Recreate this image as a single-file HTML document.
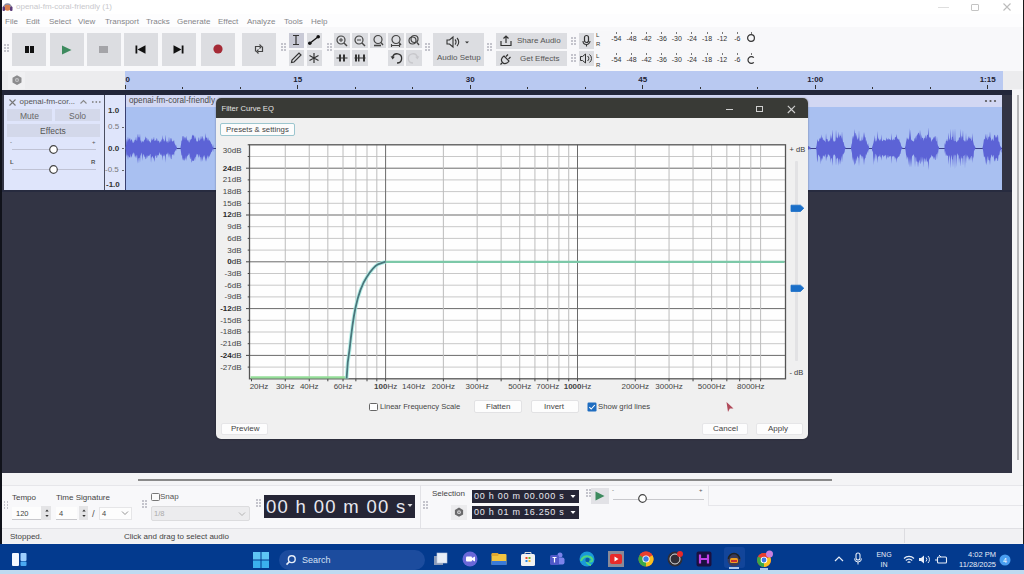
<!DOCTYPE html>
<html><head><meta charset="utf-8">
<style>
*{margin:0;padding:0;box-sizing:border-box}
html,body{width:1024px;height:574px;overflow:hidden;background:#f3f3f5;font-family:"Liberation Sans",sans-serif;color:#333}
.a{position:absolute}
.t{position:absolute;white-space:nowrap;line-height:1}
svg{position:absolute;overflow:visible}
</style></head><body>
<div class="a" style="left:0px;top:0px;width:1024px;height:14px;background:#ffffff;"></div>
<svg style="left:2px;top:1px" width="12" height="11"><circle cx="5.5" cy="6.5" r="3.2" fill="#d88050"/><path d="M1.5 7a4 4 0 0 1 8 0" stroke="#8a8aa0" stroke-width="1.3" fill="none"/><rect x="0.5" y="5.5" width="2.5" height="4.5" rx="1" fill="#5a3a7a"/><rect x="8" y="5.5" width="2.5" height="4.5" rx="1" fill="#5a3a7a"/></svg>
<div class="t" style="left:16px;top:3px;font-size:8px;color:#c8c8cc;font-weight:normal;">openai-fm-coral-friendly (1)</div>
<div class="a" style="left:938px;top:6.5px;width:11px;height:1px;background:#dedede;"></div>
<div class="a" style="left:971px;top:3.5px;width:8px;height:7px;border:1.3px solid #c4c4c4;border-radius:1px"></div>
<svg style="left:1002px;top:2px" width="10" height="10"><path d="M1.5 1.5L8.5 8.5M8.5 1.5L1.5 8.5" stroke="#bcbcbc" stroke-width="1.1"/></svg>
<div class="a" style="left:0px;top:0px;width:1.5px;height:545px;background:#10121a;"></div>
<div class="a" style="left:1.5px;top:14px;width:1022px;height:14px;background:#fdfdfe;"></div>
<div class="t" style="left:5px;top:17.5px;font-size:8px;color:#858589;font-weight:normal;">File</div>
<div class="t" style="left:26px;top:17.5px;font-size:8px;color:#858589;font-weight:normal;">Edit</div>
<div class="t" style="left:49px;top:17.5px;font-size:8px;color:#858589;font-weight:normal;">Select</div>
<div class="t" style="left:78px;top:17.5px;font-size:8px;color:#858589;font-weight:normal;">View</div>
<div class="t" style="left:105px;top:17.5px;font-size:8px;color:#858589;font-weight:normal;">Transport</div>
<div class="t" style="left:146px;top:17.5px;font-size:8px;color:#858589;font-weight:normal;">Tracks</div>
<div class="t" style="left:177px;top:17.5px;font-size:8px;color:#858589;font-weight:normal;">Generate</div>
<div class="t" style="left:218px;top:17.5px;font-size:8px;color:#858589;font-weight:normal;">Effect</div>
<div class="t" style="left:247px;top:17.5px;font-size:8px;color:#858589;font-weight:normal;">Analyze</div>
<div class="t" style="left:284px;top:17.5px;font-size:8px;color:#858589;font-weight:normal;">Tools</div>
<div class="t" style="left:311px;top:17.5px;font-size:8px;color:#858589;font-weight:normal;">Help</div>
<div class="a" style="left:1.5px;top:27px;width:1022px;height:44px;background:#f8f8fa;"></div>
<div class="a" style="left:4px;top:44px;width:1.5px;height:1.5px;background:#c4c4cc;"></div>
<div class="a" style="left:7px;top:44px;width:1.5px;height:1.5px;background:#c4c4cc;"></div>
<div class="a" style="left:4px;top:47px;width:1.5px;height:1.5px;background:#c4c4cc;"></div>
<div class="a" style="left:7px;top:47px;width:1.5px;height:1.5px;background:#c4c4cc;"></div>
<div class="a" style="left:4px;top:50px;width:1.5px;height:1.5px;background:#c4c4cc;"></div>
<div class="a" style="left:7px;top:50px;width:1.5px;height:1.5px;background:#c4c4cc;"></div>
<div class="a" style="left:12px;top:32.5px;width:34px;height:33px;background:#dcdde1;"></div>
<div class="a" style="left:49.5px;top:32.5px;width:34px;height:33px;background:#dcdde1;"></div>
<div class="a" style="left:87px;top:32.5px;width:34px;height:33px;background:#dcdde1;"></div>
<div class="a" style="left:124px;top:32.5px;width:34px;height:33px;background:#dcdde1;"></div>
<div class="a" style="left:161.5px;top:32.5px;width:34px;height:33px;background:#dcdde1;"></div>
<div class="a" style="left:201px;top:32.5px;width:34px;height:33px;background:#dcdde1;"></div>
<div class="a" style="left:241.5px;top:32.5px;width:34px;height:33px;background:#dcdde1;"></div>
<div class="a" style="left:25.3px;top:45.5px;width:3.3px;height:7.8px;background:#111;"></div>
<div class="a" style="left:30.3px;top:45.5px;width:3.3px;height:7.8px;background:#111;"></div>
<svg style="left:61px;top:44.5px" width="12" height="10"><path d="M1 0.5L10.5 5L1 9.5Z" fill="#3d8a5e"/></svg>
<div class="a" style="left:99.3px;top:45.5px;width:8.4px;height:7.8px;background:#a4a4a8;"></div>
<svg style="left:135px;top:45px" width="12" height="9"><rect x="0.5" y="0.5" width="1.8" height="8" fill="#111"/><path d="M10.5 0.3L2.5 4.5L10.5 8.7Z" fill="#111"/></svg>
<svg style="left:173px;top:45px" width="12" height="9"><rect x="8.7" y="0.5" width="1.8" height="8" fill="#111"/><path d="M0.5 0.3L8.5 4.5L0.5 8.7Z" fill="#111"/></svg>
<svg style="left:210px;top:41px" width="16" height="16"><circle cx="8" cy="8" r="4.6" fill="#a52a36"/></svg>
<svg style="left:251px;top:41px" width="16" height="16"><path d="M4.5 10.5V5.5h5M11.5 5.5v5h-5" stroke="#444" stroke-width="1.2" fill="none"/><path d="M8.5 3.5l2 2-2 2M7.5 8.5l-2 2 2 2" stroke="#444" stroke-width="1.1" fill="none"/></svg>
<div class="a" style="left:281px;top:43px;width:1.5px;height:1.5px;background:#c4c4cc;"></div>
<div class="a" style="left:284px;top:43px;width:1.5px;height:1.5px;background:#c4c4cc;"></div>
<div class="a" style="left:281px;top:46px;width:1.5px;height:1.5px;background:#c4c4cc;"></div>
<div class="a" style="left:284px;top:46px;width:1.5px;height:1.5px;background:#c4c4cc;"></div>
<div class="a" style="left:281px;top:49px;width:1.5px;height:1.5px;background:#c4c4cc;"></div>
<div class="a" style="left:284px;top:49px;width:1.5px;height:1.5px;background:#c4c4cc;"></div>
<div class="a" style="left:288.5px;top:32.5px;width:15.5px;height:15.5px;background:#c9cad6;"></div>
<div class="a" style="left:306.5px;top:32.5px;width:15.5px;height:15.5px;background:#dcdde1;"></div>
<div class="a" style="left:288.5px;top:50.3px;width:15.5px;height:15.5px;background:#dcdde1;"></div>
<div class="a" style="left:306.5px;top:50.3px;width:15.5px;height:15.5px;background:#dcdde1;"></div>
<svg style="left:288px;top:32px" width="16" height="16"><path d="M5 3.5h6M5 12.5h6M8 3.5v9" stroke="#333" stroke-width="1.2" fill="none"/></svg>
<svg style="left:306px;top:32px" width="16" height="16"><path d="M3.5 11.5L12.5 4.5" stroke="#111" stroke-width="1.3"/><circle cx="3.8" cy="11.3" r="1.8" fill="#111"/><circle cx="12.2" cy="4.7" r="1.8" fill="#111"/></svg>
<svg style="left:288px;top:50px" width="16" height="16"><path d="M3.5 12.5L4 10L11 3L13 5L6 12Z" stroke="#333" stroke-width="1.2" fill="none"/></svg>
<svg style="left:306px;top:50px" width="16" height="16"><path d="M8 3v10M3.5 5.5l9 5M12.5 5.5l-9 5" stroke="#333" stroke-width="1.2"/></svg>
<div class="a" style="left:327px;top:43px;width:1.5px;height:1.5px;background:#c4c4cc;"></div>
<div class="a" style="left:330px;top:43px;width:1.5px;height:1.5px;background:#c4c4cc;"></div>
<div class="a" style="left:327px;top:46px;width:1.5px;height:1.5px;background:#c4c4cc;"></div>
<div class="a" style="left:330px;top:46px;width:1.5px;height:1.5px;background:#c4c4cc;"></div>
<div class="a" style="left:327px;top:49px;width:1.5px;height:1.5px;background:#c4c4cc;"></div>
<div class="a" style="left:330px;top:49px;width:1.5px;height:1.5px;background:#c4c4cc;"></div>
<div class="a" style="left:334px;top:32.5px;width:16px;height:15.5px;background:#dcdde1;"></div>
<div class="a" style="left:352px;top:32.5px;width:16px;height:15.5px;background:#dcdde1;"></div>
<div class="a" style="left:370px;top:32.5px;width:16px;height:15.5px;background:#dcdde1;"></div>
<div class="a" style="left:388px;top:32.5px;width:16px;height:15.5px;background:#dcdde1;"></div>
<div class="a" style="left:406px;top:32.5px;width:16px;height:15.5px;background:#dcdde1;"></div>
<div class="a" style="left:334px;top:50.3px;width:16px;height:15.5px;background:#dcdde1;"></div>
<div class="a" style="left:352px;top:50.3px;width:16px;height:15.5px;background:#dcdde1;"></div>
<div class="a" style="left:388px;top:50.3px;width:16px;height:15.5px;background:#dcdde1;"></div>
<div class="a" style="left:406px;top:50.3px;width:16px;height:15.5px;background:#dcdde1;"></div>
<svg style="left:334px;top:33px" width="16" height="16"><circle cx="7" cy="7" r="4" stroke="#444" stroke-width="1.2" fill="none"/><path d="M10 10l3 3" stroke="#444" stroke-width="1.4"/><path d="M5 7h4M7 5v4" stroke="#444" stroke-width="1"/></svg>
<svg style="left:352px;top:33px" width="16" height="16"><circle cx="7" cy="7" r="4" stroke="#444" stroke-width="1.2" fill="none"/><path d="M10 10l3 3" stroke="#444" stroke-width="1.4"/><path d="M5 7h4" stroke="#444" stroke-width="1"/></svg>
<svg style="left:370px;top:33px" width="16" height="16"><circle cx="8" cy="6.5" r="4" stroke="#444" stroke-width="1.2" fill="none"/><path d="M11 9.5l2 2.5" stroke="#444" stroke-width="1.3"/><path d="M4 12.5h7" stroke="#444" stroke-width="1.6"/></svg>
<svg style="left:388px;top:33px" width="16" height="16"><circle cx="8" cy="6.5" r="4" stroke="#444" stroke-width="1.2" fill="none"/><path d="M11 9.5l2 2.5" stroke="#444" stroke-width="1.3"/><path d="M3.5 12.5h8M3.5 11v3M11.5 11v3" stroke="#444" stroke-width="1.1"/></svg>
<svg style="left:406px;top:33px" width="16" height="16"><circle cx="6.5" cy="7.5" r="3.5" stroke="#444" stroke-width="1.2" fill="none"/><circle cx="8.5" cy="6" r="3.5" stroke="#444" stroke-width="1.2" fill="none"/><path d="M11 9.5l2 2.5" stroke="#444" stroke-width="1.3"/></svg>
<svg style="left:334px;top:50px" width="16" height="16"><path d="M2.5 8h11" stroke="#333" stroke-width="1"/><rect x="5" y="4.5" width="2" height="7" fill="#333"/><rect x="9" y="4.5" width="2" height="7" fill="#333"/></svg>
<svg style="left:352px;top:50px" width="16" height="16"><path d="M2.5 8h11" stroke="#333" stroke-width="1"/><rect x="3" y="4.5" width="2" height="7" fill="#333"/><rect x="6" y="4.5" width="1.5" height="7" fill="#333"/><rect x="11" y="4.5" width="2" height="7" fill="#333"/></svg>
<svg style="left:388px;top:50px" width="16" height="16"><path d="M9 13A4.6 4.6 0 1 0 4.6 7.2" stroke="#333" stroke-width="1.3" fill="none"/><path d="M2.6 6.2L4.6 9.6L6.8 6.8Z" fill="#333"/></svg>
<svg style="left:406px;top:50px" width="16" height="16"><path d="M7 13A4.6 4.6 0 1 1 11.4 7.2" stroke="#c8c8cc" stroke-width="1.3" fill="none"/><path d="M13.4 6.2L11.4 9.6L9.2 6.8Z" fill="#c8c8cc"/></svg>
<div class="a" style="left:425px;top:43px;width:1.5px;height:1.5px;background:#c4c4cc;"></div>
<div class="a" style="left:428px;top:43px;width:1.5px;height:1.5px;background:#c4c4cc;"></div>
<div class="a" style="left:425px;top:46px;width:1.5px;height:1.5px;background:#c4c4cc;"></div>
<div class="a" style="left:428px;top:46px;width:1.5px;height:1.5px;background:#c4c4cc;"></div>
<div class="a" style="left:425px;top:49px;width:1.5px;height:1.5px;background:#c4c4cc;"></div>
<div class="a" style="left:428px;top:49px;width:1.5px;height:1.5px;background:#c4c4cc;"></div>
<div class="a" style="left:433px;top:32.5px;width:51px;height:33px;background:#dcdde1;"></div>
<svg style="left:445px;top:35px" width="26" height="14"><path d="M2 5h2.5L8 2v10L4.5 9H2Z" stroke="#333" stroke-width="1.1" fill="none"/><path d="M10 4.5a3.5 3.5 0 0 1 0 5M12 3a5.5 5.5 0 0 1 0 8" stroke="#333" stroke-width="1.1" fill="none"/><path d="M20 6.5l2 2 2-2Z" fill="#333"/></svg>
<div class="t" style="left:437px;top:53.8px;font-size:8px;color:#555;font-weight:normal;">Audio Setup</div>
<div class="a" style="left:487px;top:43px;width:1.5px;height:1.5px;background:#c4c4cc;"></div>
<div class="a" style="left:490px;top:43px;width:1.5px;height:1.5px;background:#c4c4cc;"></div>
<div class="a" style="left:487px;top:46px;width:1.5px;height:1.5px;background:#c4c4cc;"></div>
<div class="a" style="left:490px;top:46px;width:1.5px;height:1.5px;background:#c4c4cc;"></div>
<div class="a" style="left:487px;top:49px;width:1.5px;height:1.5px;background:#c4c4cc;"></div>
<div class="a" style="left:490px;top:49px;width:1.5px;height:1.5px;background:#c4c4cc;"></div>
<div class="a" style="left:495.5px;top:33px;width:71.5px;height:15.5px;background:#dcdde1;"></div>
<div class="a" style="left:495.5px;top:50.5px;width:71.5px;height:15.5px;background:#dcdde1;"></div>
<svg style="left:498px;top:33px" width="16" height="15"><path d="M3 8v4.5h10V8" stroke="#333" stroke-width="1.2" fill="none"/><path d="M8 10V3M5.5 5.5L8 3l2.5 2.5" stroke="#333" stroke-width="1.2" fill="none"/></svg>
<div class="t" style="left:517px;top:37px;font-size:8px;color:#555;font-weight:normal;">Share Audio</div>
<svg style="left:498px;top:51px" width="16" height="15"><path d="M4 12L2.5 13.5M4.5 11.5c-2-2-1-5 1.5-6.5L11 10c-1.5 2.5-4.5 3.5-6.5 1.5ZM8 5.5l2-2M10.5 8l2-2" stroke="#333" stroke-width="1.2" fill="none"/></svg>
<div class="t" style="left:520px;top:55.3px;font-size:8px;color:#555;font-weight:normal;">Get Effects</div>
<div class="a" style="left:571px;top:37px;width:1.5px;height:1.5px;background:#c4c4cc;"></div>
<div class="a" style="left:574px;top:37px;width:1.5px;height:1.5px;background:#c4c4cc;"></div>
<div class="a" style="left:571px;top:40px;width:1.5px;height:1.5px;background:#c4c4cc;"></div>
<div class="a" style="left:574px;top:40px;width:1.5px;height:1.5px;background:#c4c4cc;"></div>
<div class="a" style="left:571px;top:43px;width:1.5px;height:1.5px;background:#c4c4cc;"></div>
<div class="a" style="left:574px;top:43px;width:1.5px;height:1.5px;background:#c4c4cc;"></div>
<div class="a" style="left:571px;top:54px;width:1.5px;height:1.5px;background:#c4c4cc;"></div>
<div class="a" style="left:574px;top:54px;width:1.5px;height:1.5px;background:#c4c4cc;"></div>
<div class="a" style="left:571px;top:57px;width:1.5px;height:1.5px;background:#c4c4cc;"></div>
<div class="a" style="left:574px;top:57px;width:1.5px;height:1.5px;background:#c4c4cc;"></div>
<div class="a" style="left:571px;top:60px;width:1.5px;height:1.5px;background:#c4c4cc;"></div>
<div class="a" style="left:574px;top:60px;width:1.5px;height:1.5px;background:#c4c4cc;"></div>
<div class="a" style="left:578.5px;top:33px;width:15.5px;height:15.5px;background:#dcdde1;"></div>
<div class="a" style="left:578.5px;top:50.5px;width:15.5px;height:15.5px;background:#dcdde1;"></div>
<svg style="left:579px;top:33px" width="15" height="15"><rect x="5.5" y="2.5" width="4" height="7" rx="2" stroke="#333" stroke-width="1.2" fill="none"/><path d="M4 8a3.5 3.5 0 0 0 7 0M7.5 11.5v2" stroke="#333" stroke-width="1.1" fill="none"/></svg>
<svg style="left:579px;top:51px" width="15" height="15"><path d="M1.5 5.5h2L6.5 3v9L3.5 9.5h-2Z" stroke="#333" stroke-width="1" fill="none"/><path d="M8.5 5a3 3 0 0 1 0 5M10.5 3.5a5 5 0 0 1 0 8" stroke="#333" stroke-width="1" fill="none"/></svg>
<div class="a" style="left:595px;top:31px;width:165px;height:38px;background:#f7f7f9;"></div>
<div class="t" style="left:596px;top:32px;font-size:6px;color:#333;font-weight:normal;">L</div>
<div class="t" style="left:596px;top:40.5px;font-size:6px;color:#333;font-weight:normal;">R</div>
<div class="a" style="left:615.9px;top:31.5px;width:1px;height:2.5px;background:#777;"></div>
<div class="t" style="left:606.4px;top:35px;width:20px;text-align:center;font-size:7px;color:#333">-54</div>
<div class="a" style="left:631.01px;top:31.5px;width:1px;height:2.5px;background:#777;"></div>
<div class="t" style="left:621.51px;top:35px;width:20px;text-align:center;font-size:7px;color:#333">-48</div>
<div class="a" style="left:646.12px;top:31.5px;width:1px;height:2.5px;background:#777;"></div>
<div class="t" style="left:636.62px;top:35px;width:20px;text-align:center;font-size:7px;color:#333">-42</div>
<div class="a" style="left:661.23px;top:31.5px;width:1px;height:2.5px;background:#777;"></div>
<div class="t" style="left:651.73px;top:35px;width:20px;text-align:center;font-size:7px;color:#333">-36</div>
<div class="a" style="left:676.3399999999999px;top:31.5px;width:1px;height:2.5px;background:#777;"></div>
<div class="t" style="left:666.8399999999999px;top:35px;width:20px;text-align:center;font-size:7px;color:#333">-30</div>
<div class="a" style="left:691.4499999999999px;top:31.5px;width:1px;height:2.5px;background:#777;"></div>
<div class="t" style="left:681.9499999999999px;top:35px;width:20px;text-align:center;font-size:7px;color:#333">-24</div>
<div class="a" style="left:706.56px;top:31.5px;width:1px;height:2.5px;background:#777;"></div>
<div class="t" style="left:697.06px;top:35px;width:20px;text-align:center;font-size:7px;color:#333">-18</div>
<div class="a" style="left:721.67px;top:31.5px;width:1px;height:2.5px;background:#777;"></div>
<div class="t" style="left:712.17px;top:35px;width:20px;text-align:center;font-size:7px;color:#333">-12</div>
<div class="a" style="left:736.78px;top:31.5px;width:1px;height:2.5px;background:#777;"></div>
<div class="t" style="left:727.28px;top:35px;width:20px;text-align:center;font-size:7px;color:#333">-6</div>
<div class="a" style="left:751px;top:31.5px;width:1px;height:2.5px;background:#777;"></div>
<div class="t" style="left:596px;top:53px;font-size:6px;color:#333;font-weight:normal;">L</div>
<div class="t" style="left:596px;top:61.5px;font-size:6px;color:#333;font-weight:normal;">R</div>
<div class="a" style="left:615.9px;top:52.5px;width:1px;height:2.5px;background:#777;"></div>
<div class="t" style="left:606.4px;top:56px;width:20px;text-align:center;font-size:7px;color:#333">-54</div>
<div class="a" style="left:631.01px;top:52.5px;width:1px;height:2.5px;background:#777;"></div>
<div class="t" style="left:621.51px;top:56px;width:20px;text-align:center;font-size:7px;color:#333">-48</div>
<div class="a" style="left:646.12px;top:52.5px;width:1px;height:2.5px;background:#777;"></div>
<div class="t" style="left:636.62px;top:56px;width:20px;text-align:center;font-size:7px;color:#333">-42</div>
<div class="a" style="left:661.23px;top:52.5px;width:1px;height:2.5px;background:#777;"></div>
<div class="t" style="left:651.73px;top:56px;width:20px;text-align:center;font-size:7px;color:#333">-36</div>
<div class="a" style="left:676.3399999999999px;top:52.5px;width:1px;height:2.5px;background:#777;"></div>
<div class="t" style="left:666.8399999999999px;top:56px;width:20px;text-align:center;font-size:7px;color:#333">-30</div>
<div class="a" style="left:691.4499999999999px;top:52.5px;width:1px;height:2.5px;background:#777;"></div>
<div class="t" style="left:681.9499999999999px;top:56px;width:20px;text-align:center;font-size:7px;color:#333">-24</div>
<div class="a" style="left:706.56px;top:52.5px;width:1px;height:2.5px;background:#777;"></div>
<div class="t" style="left:697.06px;top:56px;width:20px;text-align:center;font-size:7px;color:#333">-18</div>
<div class="a" style="left:721.67px;top:52.5px;width:1px;height:2.5px;background:#777;"></div>
<div class="t" style="left:712.17px;top:56px;width:20px;text-align:center;font-size:7px;color:#333">-12</div>
<div class="a" style="left:736.78px;top:52.5px;width:1px;height:2.5px;background:#777;"></div>
<div class="t" style="left:727.28px;top:56px;width:20px;text-align:center;font-size:7px;color:#333">-6</div>
<div class="a" style="left:751px;top:52.5px;width:1px;height:2.5px;background:#777;"></div>
<svg style="left:745px;top:32px" width="12" height="12"><circle cx="6" cy="6" r="3.4" stroke="#333" stroke-width="1.2" fill="none"/></svg>
<svg style="left:745px;top:53.5px" width="12" height="12"><path d="M8.8 3.6A3.4 3.4 0 1 0 8.8 8.4" stroke="#333" stroke-width="1.2" fill="none"/></svg>
<div class="a" style="left:1.5px;top:71px;width:1022px;height:19px;background:#ececee;"></div>
<div class="a" style="left:125px;top:71px;width:878px;height:18.5px;background:#b9c9f1;"></div>
<div class="a" style="left:8px;top:71.5px;width:17px;height:17px;background:#f0f0f2;"></div>
<svg style="left:10px;top:73px" width="14" height="14"><path d="M7 2.3l4.5 2.5v4.8L7 12.1l-4.5-2.5V4.8Z" fill="#8c8c8e"/><circle cx="7" cy="7.1" r="2" fill="#c4c4c6"/><circle cx="7" cy="7.1" r="0.9" fill="#8c8c8e"/></svg>
<div class="t" style="left:125.5px;top:75.5px;font-size:8px;color:#223;font-weight:bold;">0</div>
<div class="t" style="left:282.7px;top:75.5px;width:30px;text-align:center;font-size:8px;color:#223;font-weight:bold">15</div>
<div class="t" style="left:455.2px;top:75.5px;width:30px;text-align:center;font-size:8px;color:#223;font-weight:bold">30</div>
<div class="t" style="left:627.7px;top:75.5px;width:30px;text-align:center;font-size:8px;color:#223;font-weight:bold">45</div>
<div class="t" style="left:800.2px;top:75.5px;width:30px;text-align:center;font-size:8px;color:#223;font-weight:bold">1:00</div>
<div class="t" style="left:972.7px;top:75.5px;width:30px;text-align:center;font-size:8px;color:#223;font-weight:bold">1:15</div>
<div class="a" style="left:124.7px;top:85px;width:1px;height:4px;background:#333;"></div>
<div class="a" style="left:182.2px;top:87px;width:1px;height:2px;background:#333;"></div>
<div class="a" style="left:239.7px;top:87px;width:1px;height:2px;background:#333;"></div>
<div class="a" style="left:297.2px;top:85px;width:1px;height:4px;background:#333;"></div>
<div class="a" style="left:354.7px;top:87px;width:1px;height:2px;background:#333;"></div>
<div class="a" style="left:412.2px;top:87px;width:1px;height:2px;background:#333;"></div>
<div class="a" style="left:469.7px;top:85px;width:1px;height:4px;background:#333;"></div>
<div class="a" style="left:527.2px;top:87px;width:1px;height:2px;background:#333;"></div>
<div class="a" style="left:584.7px;top:87px;width:1px;height:2px;background:#333;"></div>
<div class="a" style="left:642.2px;top:85px;width:1px;height:4px;background:#333;"></div>
<div class="a" style="left:699.7px;top:87px;width:1px;height:2px;background:#333;"></div>
<div class="a" style="left:757.2px;top:87px;width:1px;height:2px;background:#333;"></div>
<div class="a" style="left:814.7px;top:85px;width:1px;height:4px;background:#333;"></div>
<div class="a" style="left:872.2px;top:87px;width:1px;height:2px;background:#333;"></div>
<div class="a" style="left:929.7px;top:87px;width:1px;height:2px;background:#333;"></div>
<div class="a" style="left:987.2px;top:85px;width:1px;height:4px;background:#333;"></div>
<div class="a" style="left:1.5px;top:89.5px;width:1010.5px;height:5.3px;background:#22263a;"></div>
<div class="a" style="left:1.5px;top:95px;width:1010.5px;height:378px;background:#323444;"></div>
<div class="a" style="left:1012px;top:89px;width:12px;height:396px;background:#f4f4f6;"></div>
<div class="a" style="left:1017px;top:95px;width:2px;height:365px;background:#b5b5b8;"></div>
<div class="a" style="left:4px;top:94.5px;width:99.5px;height:95px;background:#dfe5fb;"></div>
<div class="a" style="left:1.5px;top:189.5px;width:1010.5px;height:2.5px;background:#272b3f;"></div>
<div class="a" style="left:103.5px;top:94.5px;width:1.5px;height:95px;background:#4a4e60;"></div>
<div class="a" style="left:105px;top:94.5px;width:20px;height:95px;background:#dfe5fb;"></div>
<svg style="left:8px;top:98px" width="9" height="9"><path d="M1.5 1.5L7.5 7.5M7.5 1.5L1.5 7.5" stroke="#777" stroke-width="1.1"/></svg>
<div class="t" style="left:19.5px;top:98px;font-size:8px;color:#555;font-weight:normal;">openai-fm-cor...</div>
<svg style="left:79px;top:99px" width="9" height="6"><path d="M1.5 4.5L4.5 1.5L7.5 4.5" stroke="#888" stroke-width="1.1" fill="none"/></svg>
<svg style="left:91px;top:100px" width="12" height="4"><circle cx="1.8" cy="2" r="0.9" fill="#888"/><circle cx="5.3" cy="2" r="0.9" fill="#888"/><circle cx="8.8" cy="2" r="0.9" fill="#888"/></svg>
<div class="a" style="left:7.2px;top:109.4px;width:45.3px;height:11.2px;background:#d3d8ea;"></div>
<div class="a" style="left:55.2px;top:109.4px;width:45.3px;height:11.2px;background:#d3d8ea;"></div>
<div class="t" style="left:20px;top:112px;font-size:8.5px;color:#666;font-weight:normal;">Mute</div>
<div class="t" style="left:69px;top:112px;font-size:8.5px;color:#666;font-weight:normal;">Solo</div>
<div class="a" style="left:7.2px;top:123.8px;width:93.3px;height:13.4px;background:#d3d8ea;"></div>
<div class="t" style="left:40px;top:127px;font-size:8.5px;color:#555;font-weight:normal;">Effects</div>
<div class="t" style="left:10px;top:139px;font-size:6px;color:#555;font-weight:normal;">-</div>
<div class="t" style="left:92px;top:139px;font-size:6px;color:#555;font-weight:normal;">+</div>
<div class="a" style="left:12px;top:149px;width:84px;height:1px;background:#bfc2d4;"></div>
<svg style="left:48px;top:144px" width="11" height="11"><circle cx="5.5" cy="5.5" r="3.8" fill="#fff" stroke="#444" stroke-width="1.2"/></svg>
<div class="t" style="left:10px;top:159px;font-size:6px;color:#555;font-weight:bold;">L</div>
<div class="t" style="left:91px;top:159px;font-size:6px;color:#555;font-weight:bold;">R</div>
<div class="a" style="left:12px;top:169px;width:84px;height:1px;background:#bfc2d4;"></div>
<svg style="left:48px;top:164px" width="11" height="11"><circle cx="5.5" cy="5.5" r="3.8" fill="#fff" stroke="#444" stroke-width="1.2"/></svg>
<div class="t" style="left:108px;top:107px;font-size:8px;color:#333;font-weight:bold;">1.0</div>
<div class="t" style="left:108px;top:123px;font-size:8px;color:#777;font-weight:normal;">0.5</div>
<div class="a" style="left:121.5px;top:127px;width:2.5px;height:0.8px;background:#666;"></div>
<div class="t" style="left:108px;top:145px;font-size:8px;color:#333;font-weight:bold;">0.0</div>
<div class="a" style="left:121.5px;top:148px;width:2.5px;height:0.8px;background:#666;"></div>
<div class="t" style="left:105px;top:166px;font-size:8px;color:#777;font-weight:normal;">-0.5</div>
<div class="a" style="left:121.5px;top:169.5px;width:2.5px;height:0.8px;background:#666;"></div>
<div class="t" style="left:106px;top:181px;font-size:8px;color:#333;font-weight:bold;">-1.0</div>
<div class="a" style="left:125px;top:95px;width:877px;height:94.5px;background:#a9c0f1;"></div>
<div class="a" style="left:125px;top:95px;width:877px;height:11.5px;background:#d2d7f3;"></div>
<div class="t" style="left:129px;top:96.8px;font-size:8.2px;color:#4a4a4a;font-weight:normal;">openai-fm-coral-friendly</div>
<svg style="left:984px;top:99px" width="14" height="4"><circle cx="2" cy="2" r="1.1" fill="#555"/><circle cx="6.5" cy="2" r="1.1" fill="#555"/><circle cx="11" cy="2" r="1.1" fill="#555"/></svg>
<div class="a" style="left:125px;top:147.5px;width:877px;height:1px;background:#3a3f8a;"></div>
<div class="a" style="left:124.5px;top:95px;width:1px;height:94.5px;background:#3a4070;"></div>
<svg style="left:0;top:0" width="1024" height="574"><path d="M125.5 147.5 L126.0 145.7 L126.5 138.4 L127.0 142.3 L127.5 139.9 L128.0 136.6 L128.5 140.7 L129.0 138.3 L129.5 139.6 L130.0 137.5 L130.5 141.6 L131.0 139.1 L131.5 139.8 L132.0 139.7 L132.5 143.2 L133.0 140.8 L133.5 143.1 L134.0 142.6 L134.5 140.6 L135.0 139.4 L135.5 140.3 L136.0 136.4 L136.5 140.1 L137.0 141.2 L137.5 136.0 L138.0 133.5 L138.5 137.2 L139.0 137.2 L139.5 137.5 L140.0 133.6 L140.5 141.6 L141.0 139.7 L141.5 143.2 L142.0 140.9 L142.5 141.9 L143.0 140.4 L143.5 142.5 L144.0 140.7 L144.5 139.4 L145.0 139.8 L145.5 136.2 L146.0 138.1 L146.5 137.8 L147.0 141.2 L147.5 138.1 L148.0 141.8 L148.5 138.8 L149.0 141.0 L149.5 141.0 L150.0 142.5 L150.5 142.7 L151.0 141.4 L151.5 139.5 L152.0 138.0 L152.5 140.4 L153.0 139.5 L153.5 139.0 L154.0 136.4 L154.5 141.3 L155.0 140.6 L155.5 139.9 L156.0 141.3 L156.5 138.4 L157.0 138.3 L157.5 140.7 L158.0 141.4 L158.5 140.4 L159.0 140.9 L159.5 143.5 L160.0 141.0 L160.5 141.5 L161.0 142.6 L161.5 139.0 L162.0 140.5 L162.5 135.0 L163.0 139.4 L163.5 138.4 L164.0 141.9 L164.5 140.1 L165.0 141.5 L165.5 134.4 L166.0 139.7 L166.5 142.5 L167.0 140.8 L167.5 141.4 L168.0 143.6 L168.5 141.1 L169.0 136.4 L169.5 140.8 L170.0 142.3 L170.5 138.7 L171.0 137.7 L171.5 139.1 L172.0 141.7 L172.5 141.6 L173.0 140.8 L173.5 141.5 L174.0 139.4 L174.5 143.2 L175.0 144.0 L175.5 146.0 L176.0 144.4 L176.5 147.1 L177.0 147.4 L177.0 148.6 L176.5 148.9 L176.0 151.3 L175.5 149.8 L175.0 151.6 L174.5 152.0 L174.0 155.9 L173.5 154.0 L173.0 154.8 L172.5 155.1 L172.0 153.8 L171.5 159.1 L171.0 159.3 L170.5 157.3 L170.0 153.6 L169.5 155.1 L169.0 157.9 L168.5 154.9 L168.0 152.2 L167.5 153.8 L167.0 154.7 L166.5 153.4 L166.0 155.3 L165.5 162.7 L165.0 154.7 L164.5 156.7 L164.0 153.7 L163.5 156.5 L163.0 155.5 L162.5 160.8 L162.0 154.8 L161.5 156.1 L161.0 153.3 L160.5 155.3 L160.0 154.2 L159.5 151.9 L159.0 154.3 L158.5 155.8 L158.0 155.0 L157.5 155.2 L157.0 158.0 L156.5 157.8 L156.0 154.2 L155.5 156.2 L155.0 155.9 L154.5 162.1 L154.0 159.7 L153.5 158.1 L153.0 157.6 L152.5 155.8 L152.0 157.2 L151.5 157.6 L151.0 162.9 L150.5 154.1 L150.0 154.2 L149.5 155.5 L149.0 156.0 L148.5 156.3 L148.0 155.0 L147.5 158.3 L147.0 155.0 L146.5 157.4 L146.0 159.2 L145.5 158.9 L145.0 156.2 L144.5 157.4 L144.0 154.7 L143.5 154.0 L143.0 156.1 L142.5 160.9 L142.0 154.1 L141.5 152.6 L141.0 156.2 L140.5 154.2 L140.0 162.9 L139.5 157.4 L139.0 157.9 L138.5 158.5 L138.0 163.8 L137.5 160.1 L137.0 154.5 L136.5 156.1 L136.0 158.4 L135.5 155.3 L135.0 157.4 L134.5 154.4 L134.0 152.8 L133.5 152.4 L133.0 155.0 L132.5 153.0 L132.0 156.3 L131.5 156.4 L131.0 157.9 L130.5 153.5 L130.0 158.2 L129.5 157.0 L129.0 157.0 L128.5 155.2 L128.0 160.0 L127.5 155.8 L127.0 154.3 L126.5 157.0 L126.0 150.4 L125.5 148.4Z M180.5 147.2 L181.0 144.5 L181.5 140.3 L182.0 140.9 L182.5 135.9 L183.0 136.6 L183.5 136.1 L184.0 140.3 L184.5 136.4 L185.0 138.1 L185.5 137.0 L186.0 140.2 L186.5 135.5 L187.0 139.3 L187.5 140.9 L188.0 139.6 L188.5 140.9 L189.0 142.6 L189.5 142.3 L190.0 138.7 L190.5 140.8 L191.0 139.0 L191.5 139.3 L192.0 136.1 L192.5 135.3 L193.0 134.5 L193.5 136.3 L194.0 134.8 L194.5 139.5 L195.0 136.1 L195.5 138.1 L196.0 139.1 L196.5 141.7 L197.0 140.8 L197.5 141.7 L198.0 141.2 L198.5 138.3 L199.0 137.1 L199.5 141.2 L200.0 140.0 L200.5 138.9 L201.0 135.5 L201.5 138.1 L202.0 139.5 L202.5 135.8 L203.0 137.5 L203.5 141.6 L204.0 137.7 L204.5 141.6 L205.0 138.8 L205.5 133.0 L206.0 138.0 L206.5 137.6 L207.0 137.6 L207.5 140.8 L208.0 137.0 L208.5 139.4 L209.0 140.9 L209.5 139.7 L210.0 141.3 L210.5 141.8 L211.0 143.1 L211.5 144.3 L212.0 144.2 L212.5 146.3 L213.0 147.2 L213.5 144.1 L213.5 152.4 L213.0 148.9 L212.5 149.9 L212.0 151.4 L211.5 151.9 L211.0 152.6 L210.5 154.6 L210.0 154.6 L209.5 157.3 L209.0 155.5 L208.5 157.1 L208.0 158.9 L207.5 155.1 L207.0 157.5 L206.5 161.7 L206.0 156.9 L205.5 161.8 L205.0 158.0 L204.5 154.8 L204.0 157.5 L203.5 155.2 L203.0 158.4 L202.5 161.5 L202.0 156.2 L201.5 158.9 L201.0 162.3 L200.5 157.2 L200.0 156.9 L199.5 154.0 L199.0 157.7 L198.5 156.9 L198.0 154.2 L197.5 153.9 L197.0 155.8 L196.5 153.6 L196.0 157.3 L195.5 156.6 L195.0 161.3 L194.5 157.6 L194.0 160.2 L193.5 160.9 L193.0 161.0 L192.5 160.2 L192.0 161.5 L191.5 162.8 L191.0 156.5 L190.5 159.2 L190.0 158.4 L189.5 154.4 L189.0 152.9 L188.5 155.0 L188.0 155.1 L187.5 155.9 L187.0 156.7 L186.5 161.1 L186.0 155.3 L185.5 159.9 L185.0 157.8 L184.5 160.4 L184.0 160.5 L183.5 160.0 L183.0 157.7 L182.5 160.6 L182.0 154.8 L181.5 156.1 L181.0 151.9 L180.5 148.8Z M807.5 147.7 L808.0 146.2 L808.5 146.1 L809.0 146.5 L809.5 147.1 L810.0 146.5 L810.5 147.7 L810.5 149.5 L810.0 149.5 L809.5 149.0 L809.0 149.3 L808.5 149.6 L808.0 149.7 L807.5 148.3Z M816.0 147.5 L816.5 145.9 L817.0 142.6 L817.5 139.0 L818.0 140.9 L818.5 141.4 L819.0 141.3 L819.5 137.8 L820.0 139.5 L820.5 137.0 L821.0 139.2 L821.5 134.2 L822.0 138.3 L822.5 137.1 L823.0 140.4 L823.5 139.3 L824.0 140.4 L824.5 140.4 L825.0 141.3 L825.5 142.4 L826.0 133.0 L826.5 138.8 L827.0 139.2 L827.5 138.9 L828.0 141.7 L828.5 141.1 L829.0 141.8 L829.5 139.9 L830.0 140.9 L830.5 133.8 L831.0 139.2 L831.5 137.5 L832.0 135.1 L832.5 129.6 L833.0 138.9 L833.5 141.4 L834.0 141.3 L834.5 141.5 L835.0 141.4 L835.5 140.3 L836.0 129.4 L836.5 136.4 L837.0 138.3 L837.5 138.2 L838.0 136.4 L838.5 131.5 L839.0 138.0 L839.5 136.6 L840.0 134.1 L840.5 135.7 L841.0 136.3 L841.5 139.1 L842.0 131.1 L842.5 138.1 L843.0 141.9 L843.5 141.9 L844.0 143.9 L844.5 146.3 L845.0 146.8 L845.5 147.3 L845.5 148.7 L845.0 149.3 L844.5 152.6 L844.0 152.7 L843.5 154.7 L843.0 153.4 L842.5 156.6 L842.0 162.8 L841.5 155.8 L841.0 159.6 L840.5 161.3 L840.0 164.8 L839.5 159.7 L839.0 158.2 L838.5 166.1 L838.0 158.7 L837.5 157.5 L837.0 158.7 L836.5 158.4 L836.0 166.0 L835.5 156.7 L835.0 155.2 L834.5 154.6 L834.0 154.4 L833.5 154.9 L833.0 157.0 L832.5 166.0 L832.0 159.8 L831.5 158.2 L831.0 157.9 L830.5 163.1 L830.0 154.9 L829.5 156.9 L829.0 154.5 L828.5 155.3 L828.0 153.6 L827.5 157.4 L827.0 156.2 L826.5 158.4 L826.0 161.3 L825.5 154.1 L825.0 155.0 L824.5 156.7 L824.0 156.5 L823.5 155.9 L823.0 155.1 L822.5 160.0 L822.0 157.4 L821.5 161.8 L821.0 157.8 L820.5 164.4 L820.0 155.4 L819.5 157.6 L819.0 155.2 L818.5 154.5 L818.0 156.1 L817.5 162.6 L817.0 159.7 L816.5 150.2 L816.0 148.6Z M851.0 147.5 L851.5 144.6 L852.0 142.9 L852.5 135.4 L853.0 139.6 L853.5 134.9 L854.0 137.5 L854.5 129.1 L855.0 133.3 L855.5 133.1 L856.0 136.9 L856.5 134.0 L857.0 138.7 L857.5 140.1 L858.0 136.9 L858.5 139.3 L859.0 130.1 L859.5 140.1 L860.0 141.4 L860.5 140.0 L861.0 141.5 L861.5 140.0 L862.0 136.0 L862.5 140.2 L863.0 140.3 L863.5 135.6 L864.0 132.0 L864.5 135.0 L865.0 137.8 L865.5 137.0 L866.0 142.0 L866.5 139.7 L867.0 143.6 L867.5 144.2 L868.0 145.5 L868.5 146.8 L869.0 142.2 L869.0 153.2 L868.5 149.1 L868.0 150.7 L867.5 152.3 L867.0 152.9 L866.5 155.8 L866.0 153.5 L865.5 158.1 L865.0 158.2 L864.5 160.1 L864.0 165.2 L863.5 159.4 L863.0 156.2 L862.5 156.4 L862.0 159.3 L861.5 156.0 L861.0 155.4 L860.5 154.9 L860.0 153.7 L859.5 156.9 L859.0 166.2 L858.5 157.5 L858.0 157.9 L857.5 155.8 L857.0 157.5 L856.5 161.4 L856.0 157.9 L855.5 163.4 L855.0 163.5 L854.5 165.5 L854.0 158.3 L853.5 163.1 L853.0 156.7 L852.5 160.9 L852.0 153.3 L851.5 151.0 L851.0 148.4Z M872.0 147.4 L872.5 145.9 L873.0 144.6 L873.5 142.7 L874.0 139.9 L874.5 134.9 L875.0 141.6 L875.5 141.2 L876.0 137.6 L876.5 141.7 L877.0 139.8 L877.5 131.0 L878.0 137.2 L878.5 138.7 L879.0 139.5 L879.5 140.0 L880.0 141.2 L880.5 138.6 L881.0 140.5 L881.5 134.3 L882.0 141.1 L882.5 141.3 L883.0 140.6 L883.5 139.2 L884.0 140.4 L884.5 139.9 L885.0 140.3 L885.5 140.7 L886.0 140.5 L886.5 137.3 L887.0 139.2 L887.5 139.0 L888.0 140.4 L888.5 137.7 L889.0 139.8 L889.5 139.0 L890.0 139.5 L890.5 139.7 L891.0 140.5 L891.5 133.1 L892.0 140.1 L892.5 139.4 L893.0 140.8 L893.5 138.6 L894.0 139.9 L894.5 139.9 L895.0 137.0 L895.5 137.3 L896.0 137.3 L896.5 133.9 L897.0 137.2 L897.5 138.7 L898.0 139.0 L898.5 140.0 L899.0 138.5 L899.5 140.9 L900.0 142.2 L900.5 142.8 L901.0 145.3 L901.5 146.6 L902.0 147.1 L902.5 147.4 L902.5 148.7 L902.0 148.8 L901.5 149.3 L901.0 150.7 L900.5 153.7 L900.0 153.9 L899.5 155.8 L899.0 156.7 L898.5 156.8 L898.0 156.7 L897.5 158.5 L897.0 158.3 L896.5 162.9 L896.0 157.5 L895.5 157.7 L895.0 160.1 L894.5 156.2 L894.0 157.1 L893.5 156.1 L893.0 155.8 L892.5 157.1 L892.0 155.7 L891.5 164.1 L891.0 155.4 L890.5 156.8 L890.0 155.8 L889.5 156.8 L889.0 156.5 L888.5 158.3 L888.0 154.5 L887.5 157.3 L887.0 157.6 L886.5 160.1 L886.0 154.8 L885.5 154.9 L885.0 156.5 L884.5 155.5 L884.0 155.7 L883.5 157.4 L883.0 155.0 L882.5 155.2 L882.0 155.7 L881.5 160.7 L881.0 156.4 L880.5 157.8 L880.0 154.0 L879.5 156.4 L879.0 155.9 L878.5 156.5 L878.0 157.2 L877.5 163.3 L877.0 156.3 L876.5 154.2 L876.0 159.5 L875.5 154.5 L875.0 153.5 L874.5 162.1 L874.0 156.8 L873.5 165.2 L873.0 151.8 L872.5 150.3 L872.0 152.7Z M905.0 147.5 L905.5 145.7 L906.0 142.2 L906.5 140.0 L907.0 136.9 L907.5 139.5 L908.0 138.0 L908.5 139.3 L909.0 140.0 L909.5 128.0 L910.0 137.8 L910.5 129.3 L911.0 138.9 L911.5 140.3 L912.0 140.2 L912.5 140.9 L913.0 141.0 L913.5 141.6 L914.0 141.6 L914.5 138.3 L915.0 138.5 L915.5 135.9 L916.0 140.5 L916.5 135.8 L917.0 135.5 L917.5 134.5 L918.0 133.6 L918.5 132.4 L919.0 133.3 L919.5 136.1 L920.0 129.7 L920.5 134.2 L921.0 140.0 L921.5 134.5 L922.0 137.4 L922.5 138.0 L923.0 138.0 L923.5 141.0 L924.0 137.9 L924.5 137.6 L925.0 139.1 L925.5 136.1 L926.0 135.1 L926.5 139.3 L927.0 134.9 L927.5 135.0 L928.0 134.1 L928.5 127.2 L929.0 137.8 L929.5 136.5 L930.0 138.5 L930.5 136.7 L931.0 139.5 L931.5 142.0 L932.0 140.3 L932.5 139.2 L933.0 139.3 L933.5 136.8 L934.0 138.8 L934.5 136.7 L935.0 136.6 L935.5 135.9 L936.0 141.1 L936.5 141.6 L937.0 136.0 L937.5 143.8 L938.0 145.7 L938.5 146.6 L939.0 147.3 L939.0 148.8 L938.5 149.4 L938.0 154.3 L937.5 151.8 L937.0 159.5 L936.5 154.2 L936.0 154.3 L935.5 160.1 L935.0 159.7 L934.5 157.9 L934.0 156.5 L933.5 159.5 L933.0 155.9 L932.5 156.4 L932.0 156.5 L931.5 154.5 L931.0 157.3 L930.5 157.6 L930.0 157.8 L929.5 159.2 L929.0 159.7 L928.5 170.1 L928.0 163.0 L927.5 160.7 L927.0 162.3 L926.5 156.9 L926.0 162.3 L925.5 158.4 L925.0 162.8 L924.5 158.3 L924.0 158.8 L923.5 167.6 L923.0 156.5 L922.5 159.4 L922.0 162.7 L921.5 161.1 L921.0 156.2 L920.5 163.6 L920.0 163.7 L919.5 159.6 L919.0 161.6 L918.5 163.0 L918.0 167.6 L917.5 162.1 L917.0 161.3 L916.5 161.7 L916.0 156.5 L915.5 158.4 L915.0 167.3 L914.5 157.1 L914.0 155.4 L913.5 154.2 L913.0 155.1 L912.5 155.7 L912.0 156.6 L911.5 167.2 L911.0 156.7 L910.5 167.5 L910.0 157.9 L909.5 167.8 L909.0 156.0 L908.5 165.6 L908.0 158.1 L907.5 156.6 L907.0 160.1 L906.5 156.2 L906.0 154.5 L905.5 150.1 L905.0 148.5Z M944.5 142.5 L945.0 145.0 L945.5 143.5 L946.0 140.5 L946.5 141.2 L947.0 138.6 L947.5 140.7 L948.0 141.7 L948.5 132.4 L949.0 137.6 L949.5 140.5 L950.0 138.2 L950.5 128.8 L951.0 139.6 L951.5 140.2 L952.0 136.5 L952.5 137.1 L953.0 128.8 L953.5 138.0 L954.0 141.4 L954.5 140.8 L955.0 127.7 L955.5 140.8 L956.0 141.3 L956.5 142.4 L957.0 141.6 L957.5 141.3 L958.0 139.8 L958.5 140.8 L959.0 137.3 L959.5 137.7 L960.0 137.3 L960.5 128.7 L961.0 140.2 L961.5 135.2 L962.0 137.7 L962.5 135.8 L963.0 130.0 L963.5 140.6 L964.0 140.0 L964.5 141.8 L965.0 140.2 L965.5 141.9 L966.0 132.7 L966.5 142.0 L967.0 138.0 L967.5 141.1 L968.0 139.4 L968.5 137.3 L969.0 136.1 L969.5 138.2 L970.0 138.2 L970.5 139.3 L971.0 136.2 L971.5 140.9 L972.0 140.2 L972.5 133.1 L973.0 140.8 L973.5 143.1 L974.0 145.3 L974.5 145.4 L975.0 147.0 L975.5 147.4 L975.5 148.6 L975.0 148.9 L974.5 150.4 L974.0 150.5 L973.5 158.7 L973.0 156.2 L972.5 163.0 L972.0 156.1 L971.5 156.1 L971.0 160.9 L970.5 156.6 L970.0 158.6 L969.5 158.8 L969.0 161.0 L968.5 157.6 L968.0 156.4 L967.5 154.9 L967.0 159.1 L966.5 154.2 L966.0 164.2 L965.5 153.4 L965.0 168.8 L964.5 155.1 L964.0 155.8 L963.5 156.1 L963.0 165.7 L962.5 159.0 L962.0 157.6 L961.5 158.9 L961.0 155.4 L960.5 166.8 L960.0 159.7 L959.5 157.6 L959.0 163.3 L958.5 154.5 L958.0 156.0 L957.5 153.7 L957.0 153.5 L956.5 167.3 L956.0 155.7 L955.5 154.6 L955.0 169.4 L954.5 156.1 L954.0 154.3 L953.5 157.7 L953.0 167.5 L952.5 159.4 L952.0 159.3 L951.5 154.8 L951.0 157.3 L950.5 168.5 L950.0 157.0 L949.5 154.9 L949.0 158.7 L948.5 164.8 L948.0 154.7 L947.5 156.1 L947.0 156.1 L946.5 154.1 L946.0 156.5 L945.5 153.2 L945.0 150.6 L944.5 154.1Z M982.5 147.6 L983.0 145.8 L983.5 142.8 L984.0 139.0 L984.5 138.8 L985.0 139.9 L985.5 133.5 L986.0 137.3 L986.5 138.7 L987.0 133.3 L987.5 139.7 L988.0 139.5 L988.5 136.9 L989.0 136.6 L989.5 136.8 L990.0 131.3 L990.5 137.3 L991.0 138.6 L991.5 141.1 L992.0 140.3 L992.5 138.2 L993.0 140.2 L993.5 140.9 L994.0 136.1 L994.5 135.1 L995.0 134.7 L995.5 137.0 L996.0 138.0 L996.5 136.0 L997.0 137.9 L997.5 134.8 L998.0 135.1 L998.5 141.4 L999.0 141.6 L999.5 142.4 L1000.0 145.4 L1000.5 146.4 L1001.0 147.1 L1001.5 147.4 L1001.5 152.3 L1001.0 152.4 L1000.5 149.7 L1000.0 150.6 L999.5 154.3 L999.0 155.2 L998.5 155.5 L998.0 161.0 L997.5 161.0 L997.0 158.3 L996.5 158.6 L996.0 157.6 L995.5 159.6 L995.0 161.4 L994.5 161.1 L994.0 158.8 L993.5 154.8 L993.0 156.0 L992.5 157.6 L992.0 155.3 L991.5 154.5 L991.0 157.1 L990.5 158.4 L990.0 165.2 L989.5 160.5 L989.0 160.3 L988.5 160.1 L988.0 156.1 L987.5 157.4 L987.0 162.4 L986.5 165.3 L986.0 158.0 L985.5 164.1 L985.0 156.1 L984.5 157.1 L984.0 157.6 L983.5 153.4 L983.0 150.0 L982.5 148.4Z" fill="#5c63d6"/></svg>
<div class="a" style="left:2px;top:473px;width:1010px;height:12px;background:#f4f4f6;"></div>
<div class="a" style="left:138px;top:479px;width:694px;height:1.5px;background:#8a8a8a;"></div>
<div class="a" style="left:2px;top:485px;width:1022px;height:43px;background:#f8f8fa;"></div>
<div class="a" style="left:2px;top:484.5px;width:1022px;height:0.7px;background:#e6e6ea;"></div>
<div class="a" style="left:3.5px;top:501px;width:1.5px;height:1.5px;background:#c4c4cc;"></div>
<div class="a" style="left:6.5px;top:501px;width:1.5px;height:1.5px;background:#c4c4cc;"></div>
<div class="a" style="left:3.5px;top:504px;width:1.5px;height:1.5px;background:#c4c4cc;"></div>
<div class="a" style="left:6.5px;top:504px;width:1.5px;height:1.5px;background:#c4c4cc;"></div>
<div class="a" style="left:3.5px;top:507px;width:1.5px;height:1.5px;background:#c4c4cc;"></div>
<div class="a" style="left:6.5px;top:507px;width:1.5px;height:1.5px;background:#c4c4cc;"></div>
<div class="t" style="left:12px;top:494px;font-size:8px;color:#444;font-weight:normal;">Tempo</div>
<div class="t" style="left:56px;top:494px;font-size:8px;color:#444;font-weight:normal;">Time Signature</div>
<div class="a" style="left:12px;top:507px;width:28.5px;height:12.5px;background:#fdfdfd;border-bottom:1px solid #c8c8cc"></div>
<div class="t" style="left:16px;top:509.5px;font-size:7.5px;color:#444;font-weight:normal;">120</div>
<div class="a" style="left:41.3px;top:505.5px;width:9.5px;height:14.5px;background:#e4e4e6;"></div>
<div class="a" style="left:56px;top:507px;width:21px;height:12.5px;background:#fdfdfd;border-bottom:1px solid #c8c8cc"></div>
<div class="t" style="left:59px;top:509.5px;font-size:7.5px;color:#444;font-weight:normal;">4</div>
<div class="a" style="left:78.7px;top:505.5px;width:9px;height:14.5px;background:#e4e4e6;"></div>
<svg style="left:41.5px;top:506px" width="10" height="14"><path d="M3.3 5.5L5 3.5 6.7 5.5Z M3.3 9L5 11 6.7 9Z" fill="#333"/></svg>
<svg style="left:78.5px;top:506px" width="10" height="14"><path d="M3.3 5.5L5 3.5 6.7 5.5Z M3.3 9L5 11 6.7 9Z" fill="#333"/></svg>
<div class="t" style="left:92px;top:508.5px;font-size:9.5px;color:#555;font-weight:normal;">/</div>
<div class="a" style="left:99px;top:507px;width:32.5px;height:13px;background:#fdfdfd;border:1px solid #e6e6e8"></div>
<div class="t" style="left:102px;top:509.5px;font-size:7.5px;color:#444;font-weight:normal;">4</div>
<svg style="left:121px;top:510px" width="8" height="6"><path d="M1 1.5l3 3 3-3" stroke="#888" stroke-width="0.9" fill="none"/></svg>
<div class="a" style="left:142px;top:500px;width:1.5px;height:1.5px;background:#c4c4cc;"></div>
<div class="a" style="left:145px;top:500px;width:1.5px;height:1.5px;background:#c4c4cc;"></div>
<div class="a" style="left:142px;top:503px;width:1.5px;height:1.5px;background:#c4c4cc;"></div>
<div class="a" style="left:145px;top:503px;width:1.5px;height:1.5px;background:#c4c4cc;"></div>
<div class="a" style="left:142px;top:506px;width:1.5px;height:1.5px;background:#c4c4cc;"></div>
<div class="a" style="left:145px;top:506px;width:1.5px;height:1.5px;background:#c4c4cc;"></div>
<div class="a" style="left:151px;top:492.5px;width:8.5px;height:8.5px;border:1px solid #777;border-radius:1.5px;background:#fbfbfb"></div>
<div class="t" style="left:160px;top:493px;font-size:8px;color:#555;font-weight:normal;">Snap</div>
<div class="a" style="left:151px;top:505.6px;width:99px;height:15px;background:#ececee;border:1px solid #dcdcde;border-radius:2px"></div>
<div class="t" style="left:154px;top:509.5px;font-size:7.5px;color:#aaa;font-weight:normal;">1/8</div>
<svg style="left:238px;top:511px" width="8" height="6"><path d="M1 1.5l3 3 3-3" stroke="#aaa" stroke-width="0.9" fill="none"/></svg>
<div class="a" style="left:256px;top:499px;width:1.5px;height:1.5px;background:#c4c4cc;"></div>
<div class="a" style="left:259px;top:499px;width:1.5px;height:1.5px;background:#c4c4cc;"></div>
<div class="a" style="left:256px;top:502px;width:1.5px;height:1.5px;background:#c4c4cc;"></div>
<div class="a" style="left:259px;top:502px;width:1.5px;height:1.5px;background:#c4c4cc;"></div>
<div class="a" style="left:256px;top:505px;width:1.5px;height:1.5px;background:#c4c4cc;"></div>
<div class="a" style="left:259px;top:505px;width:1.5px;height:1.5px;background:#c4c4cc;"></div>
<div class="a" style="left:264px;top:494.6px;width:151px;height:23.4px;background:#262636;"></div>
<div class="t" style="left:266px;top:498px;font-size:18.5px;color:#e8e8f0;font-weight:normal;letter-spacing:1.3px">00 h 00 m 00 s</div>
<svg style="left:407px;top:503px" width="6" height="5"><path d="M0.5 1h5l-2.5 3Z" fill="#ddd"/></svg>
<div class="a" style="left:419.5px;top:485px;width:1px;height:43px;background:#e2e2e6;"></div>
<div class="a" style="left:423px;top:501px;width:1.5px;height:1.5px;background:#c4c4cc;"></div>
<div class="a" style="left:426px;top:501px;width:1.5px;height:1.5px;background:#c4c4cc;"></div>
<div class="a" style="left:423px;top:504px;width:1.5px;height:1.5px;background:#c4c4cc;"></div>
<div class="a" style="left:426px;top:504px;width:1.5px;height:1.5px;background:#c4c4cc;"></div>
<div class="a" style="left:423px;top:507px;width:1.5px;height:1.5px;background:#c4c4cc;"></div>
<div class="a" style="left:426px;top:507px;width:1.5px;height:1.5px;background:#c4c4cc;"></div>
<div class="t" style="left:432px;top:490px;font-size:8px;color:#444;font-weight:normal;">Selection</div>
<div class="a" style="left:472px;top:490px;width:107px;height:13px;background:#262636;"></div>
<div class="t" style="left:474px;top:491.5px;font-size:9px;color:#e8e8f0;font-weight:normal;letter-spacing:0.75px">00 h 00 m 00.000 s</div>
<svg style="left:570px;top:494px" width="6" height="5"><path d="M0.5 1h5l-2.5 3Z" fill="#fff"/></svg>
<div class="a" style="left:451px;top:504.5px;width:16px;height:15px;background:#ececee;"></div>
<svg style="left:452px;top:505px" width="14" height="14"><path d="M7 2.6l4.1 2.3v4.6L7 11.8l-4.1-2.3V4.9Z" fill="#6a6a6c"/><circle cx="7" cy="7.2" r="1.9" fill="#d0d0d2"/><circle cx="7" cy="7.2" r="0.8" fill="#6a6a6c"/></svg>
<div class="a" style="left:472px;top:506px;width:107px;height:13px;background:#262636;"></div>
<div class="t" style="left:474px;top:507.5px;font-size:9px;color:#e8e8f0;font-weight:normal;letter-spacing:0.75px">00 h 01 m 16.250 s</div>
<svg style="left:570px;top:510px" width="6" height="5"><path d="M0.5 1h5l-2.5 3Z" fill="#fff"/></svg>
<div class="a" style="left:586px;top:489px;width:1.5px;height:1.5px;background:#c4c4cc;"></div>
<div class="a" style="left:589px;top:489px;width:1.5px;height:1.5px;background:#c4c4cc;"></div>
<div class="a" style="left:586px;top:492px;width:1.5px;height:1.5px;background:#c4c4cc;"></div>
<div class="a" style="left:589px;top:492px;width:1.5px;height:1.5px;background:#c4c4cc;"></div>
<div class="a" style="left:586px;top:495px;width:1.5px;height:1.5px;background:#c4c4cc;"></div>
<div class="a" style="left:589px;top:495px;width:1.5px;height:1.5px;background:#c4c4cc;"></div>
<div class="a" style="left:591px;top:488px;width:18px;height:16px;background:#e2e2e6;"></div>
<svg style="left:593px;top:490px" width="14" height="12"><path d="M2.5 1.5L11.5 6L2.5 10.5Z" fill="#3d8a5e"/></svg>
<div class="t" style="left:612px;top:487px;font-size:6px;color:#555;font-weight:normal;">-</div>
<div class="t" style="left:699px;top:487px;font-size:6px;color:#555;font-weight:normal;">+</div>
<div class="a" style="left:613px;top:498.5px;width:91px;height:1px;background:#c8c8cc;"></div>
<svg style="left:637px;top:493px" width="11" height="11"><circle cx="5.5" cy="5.5" r="3.8" fill="#fff" stroke="#444" stroke-width="1.2"/></svg>
<div class="a" style="left:708px;top:485px;width:1px;height:20.5px;background:#e6e6ea;"></div>
<div class="a" style="left:708px;top:505.3px;width:316px;height:1px;background:#e6e6ea;"></div>
<div class="a" style="left:2px;top:528px;width:1022px;height:15px;background:#f1f1f3;"></div>
<div class="a" style="left:2px;top:527.5px;width:1022px;height:0.8px;background:#e0e0e4;"></div>
<div class="t" style="left:10px;top:532.5px;font-size:8px;color:#444;font-weight:normal;">Stopped.</div>
<div class="t" style="left:124px;top:532.5px;font-size:8px;color:#444;font-weight:normal;">Click and drag to select audio</div>
<div class="a" style="left:904px;top:528px;width:1px;height:15px;background:#dcdce0;"></div>
<div class="a" style="left:1022.5px;top:0px;width:1.5px;height:545px;background:#1a1a1a;"></div>
<div class="a" style="left:0px;top:543.5px;width:1024px;height:26.5px;background:#033a8e;"></div>
<div class="a" style="left:0px;top:569.5px;width:1024px;height:4.5px;background:#bedaf0;"></div>
<svg style="left:11px;top:552px" width="18" height="15"><rect x="1" y="1" width="7" height="13" rx="1" fill="#f4f8ff"/><rect x="9.5" y="1" width="6" height="8" rx="1" fill="#9ed0ff"/><rect x="9.5" y="9.5" width="6" height="4.5" rx="1" fill="#4aa8f0"/></svg>
<svg style="left:252px;top:551px" width="18" height="18"><rect x="1" y="1" width="7.5" height="7.5" fill="#5ec4f4"/><rect x="9.5" y="1" width="7.5" height="7.5" fill="#5ec4f4"/><rect x="1" y="9.5" width="7.5" height="7.5" fill="#3ab0ee"/><rect x="9.5" y="9.5" width="7.5" height="7.5" fill="#3ab0ee"/></svg>
<div class="a" style="left:278.5px;top:549.5px;width:146px;height:20px;background:#1c4c9e;border-radius:10px"></div>
<svg style="left:285px;top:554px" width="12" height="12"><circle cx="6.8" cy="5.2" r="3.4" stroke="#e8eef8" stroke-width="1.4" fill="none"/><path d="M4.3 7.8L1.5 10.6" stroke="#e8eef8" stroke-width="1.6"/></svg>
<div class="t" style="left:302px;top:556px;font-size:9px;color:#d6e2f4;font-weight:normal;">Search</div>
<svg style="left:432px;top:549.5px" width="18" height="18"><rect x="2" y="6" width="9" height="9" fill="#8a9ab8"/><rect x="5" y="3" width="10" height="10" fill="#e8eef8" stroke="#bcc8dc" stroke-width="0.6"/></svg>
<svg style="left:461px;top:549.5px" width="18" height="18"><circle cx="9" cy="9" r="7.5" fill="#6a68d8"/><rect x="5" y="6.5" width="6" height="5" rx="1" fill="#fff"/><path d="M11 8l3-1.5v5L11 10Z" fill="#fff"/></svg>
<svg style="left:490px;top:549.5px" width="18" height="18"><rect x="1.5" y="4" width="15" height="11" rx="1" fill="#f2c440"/><rect x="1.5" y="3" width="7" height="3" rx="1" fill="#e0a830"/><rect x="1.5" y="11" width="15" height="4" fill="#3a7ad8"/></svg>
<svg style="left:519px;top:549.5px" width="18" height="18"><rect x="2" y="4" width="14" height="12" rx="1.5" fill="#f2f2f2"/><path d="M6 4V2.5h6V4" stroke="#ddd" fill="none"/><rect x="6.5" y="7" width="2" height="2" fill="#e84a2a"/><rect x="9.5" y="7" width="2" height="2" fill="#6ab82a"/><rect x="6.5" y="10" width="2" height="2" fill="#2a8ae8"/><rect x="9.5" y="10" width="2" height="2" fill="#f2b82a"/></svg>
<svg style="left:548px;top:549.5px" width="18" height="18"><circle cx="12" cy="5" r="2.5" fill="#7b83eb"/><rect x="9" y="7.5" width="7.5" height="7" rx="2" fill="#7b83eb"/><rect x="2" y="5" width="9" height="10" rx="1.5" fill="#5059c9"/><path d="M4.5 7.5h4M6.5 7.5v5" stroke="#fff" stroke-width="1.2"/></svg>
<svg style="left:578px;top:549.5px" width="18" height="18"><circle cx="9" cy="9" r="7.5" fill="#1a9ad8"/><path d="M3 11c1-4 5-6 9-4 2 1 3 3 2 4-1 1-4 0-5-1-1 2 1 5 4 5" stroke="#4ed880" stroke-width="2" fill="none"/><circle cx="9.5" cy="10" r="2.2" fill="#0a5aa8"/></svg>
<svg style="left:607px;top:549.5px" width="18" height="18"><rect x="1" y="1" width="16" height="16" fill="#8a8a98"/><rect x="3" y="4" width="12" height="10" rx="2" fill="#e82a2a"/><path d="M7.5 6.5l4 2.5-4 2.5Z" fill="#fff"/></svg>
<svg style="left:637px;top:549.5px" width="18" height="18"><circle cx="9" cy="9" r="7.5" fill="#e84030"/><path d="M9 9L2.5 5.2A7.5 7.5 0 0 1 15.5 5.2Z" fill="#e84030"/><path d="M9 9L15.5 5.2A7.5 7.5 0 0 1 9 16.5Z" fill="#f8c020"/><path d="M9 9L9 16.5A7.5 7.5 0 0 1 2.5 5.2Z" fill="#3aa848"/><circle cx="9" cy="9" r="3.6" fill="#fff"/><circle cx="9" cy="9" r="2.7" fill="#3a78e8"/></svg>
<svg style="left:666px;top:549.5px" width="18" height="18"><circle cx="9" cy="9" r="7.5" fill="#302e36"/><circle cx="9" cy="9" r="5" stroke="#ddd" stroke-width="1" fill="none"/><circle cx="14" cy="4" r="3" fill="#e82a2a"/></svg>
<svg style="left:695px;top:549.5px" width="18" height="18"><rect x="1.5" y="1.5" width="15" height="15" rx="2" fill="#1a1040"/><path d="M5 4.5v9M13 4.5v9M5 9h8" stroke="#c040e8" stroke-width="2.2"/></svg>
<div class="a" style="left:723.5px;top:546.5px;width:21px;height:21.5px;background:#12459a;border-radius:3px"></div>
<svg style="left:725px;top:549.5px" width="18" height="18"><circle cx="9" cy="10" r="6.5" fill="#3a3a58"/><path d="M3.5 9a5.5 5.5 0 0 1 11 0" stroke="#222" stroke-width="1.5" fill="none"/><rect x="5" y="8" width="8" height="5" rx="1.5" fill="#f0a020"/><rect x="6" y="10" width="6" height="2" fill="#c83030"/></svg>
<div class="a" style="left:729px;top:567px;width:10px;height:2px;background:#a8c4ec;"></div>
<svg style="left:755px;top:549.5px" width="18" height="18"><circle cx="9" cy="10" r="7" fill="#e84030"/><path d="M9 10L3 6.5A7 7 0 0 1 15 6.5Z" fill="#e84030"/><path d="M9 10L15 6.5A7 7 0 0 1 9 17Z" fill="#f8c020"/><path d="M9 10L9 17A7 7 0 0 1 3 6.5Z" fill="#3aa848"/><circle cx="9" cy="10" r="3.3" fill="#fff"/><circle cx="9" cy="10" r="2.4" fill="#3a78e8"/><circle cx="14.5" cy="4" r="3.5" fill="#c880e0"/></svg>
<div class="a" style="left:760px;top:568px;width:8px;height:1.5px;background:#a8c4ec;"></div>
<svg style="left:834px;top:555px" width="10" height="8"><path d="M1 6l4-4 4 4" stroke="#e8eef8" stroke-width="1.2" fill="none"/></svg>
<svg style="left:853px;top:552px" width="10" height="14"><rect x="3" y="1" width="4" height="7" rx="2" stroke="#e8eef8" stroke-width="1.1" fill="none"/><path d="M1.5 6.5a3.5 3.5 0 0 0 7 0M5 10v2.5" stroke="#e8eef8" stroke-width="1" fill="none"/></svg>
<div class="t" style="left:873px;top:550px;width:22px;text-align:center;font-size:7px;color:#e8eef8;line-height:10px">ENG<br>IN</div>
<svg style="left:903px;top:555px" width="12" height="10"><path d="M1 3.5a7 7 0 0 1 10 0M2.8 5.5a4.5 4.5 0 0 1 6.4 0M4.6 7.5a2 2 0 0 1 2.8 0" stroke="#e8eef8" stroke-width="1.1" fill="none"/></svg>
<svg style="left:918px;top:554px" width="13" height="11"><path d="M1 4h2l3-2.5v8L3 7H1Z" fill="#e8eef8"/><path d="M8 3.5a3 3 0 0 1 0 4M10 2a5 5 0 0 1 0 7" stroke="#e8eef8" stroke-width="1" fill="none"/></svg>
<svg style="left:935px;top:554px" width="13" height="11"><rect x="2.5" y="3" width="9" height="6" rx="1" stroke="#e8eef8" stroke-width="1.1" fill="none"/><path d="M1 5v2" stroke="#e8eef8"/><path d="M4 1l2 2" stroke="#e8eef8"/></svg>
<div class="t" style="left:950px;top:550px;width:46px;text-align:right;font-size:7.5px;color:#e8eef8;line-height:10px">4:02 PM<br>11/28/2025</div>
<svg style="left:999px;top:554px" width="12" height="12"><circle cx="6" cy="6" r="5.5" fill="#4a9ef0"/><text x="6" y="8.5" font-size="7" text-anchor="middle" fill="#fff" font-family="Liberation Sans">4</text></svg>
<div class="a" style="left:216px;top:98px;width:591.5px;height:340.8px;background:#f0f0f0;border-radius:5px;overflow:hidden;box-shadow:0 0 2px rgba(0,0,0,0.4)"><div class="a" style="left:0;top:0;width:100%;height:20.3px;background:#393a36"></div></div>
<div class="t" style="left:221.5px;top:104.5px;font-size:7.6px;color:#e4e4e4;font-weight:normal;">Filter Curve EQ</div>
<div class="a" style="left:725.5px;top:108.5px;width:7.5px;height:1px;background:#d0d0d0;"></div>
<div class="a" style="left:756.3px;top:105.5px;width:6.8px;height:6.8px;border:1.2px solid #d0d0d0"></div>
<svg style="left:787px;top:104.5px" width="9" height="9"><path d="M0.8 0.8L8 8M8 0.8L0.8 8" stroke="#d0d0d0" stroke-width="1.1"/></svg>
<div class="a" style="left:220px;top:123px;width:75px;height:13px;background:#fcfcfc;border:1px solid #9cc6cf;border-radius:2px"></div>
<div class="t" style="left:226px;top:126px;font-size:7.8px;color:#444;font-weight:normal;">Presets &amp; settings</div>
<svg style="left:0;top:0" width="1024" height="574"><rect x="249.5" y="144.8" width="536.0" height="234.0" fill="#fefefe"/><path d="M249.5 156.50H785.5" stroke="#c8c8c8" stroke-width="1"/><path d="M249.5 168.20H785.5" stroke="#6a6a6a" stroke-width="1"/><path d="M249.5 179.90H785.5" stroke="#c8c8c8" stroke-width="1"/><path d="M249.5 191.60H785.5" stroke="#c8c8c8" stroke-width="1"/><path d="M249.5 203.30H785.5" stroke="#c8c8c8" stroke-width="1"/><path d="M249.5 215.00H785.5" stroke="#6a6a6a" stroke-width="1"/><path d="M249.5 226.70H785.5" stroke="#c8c8c8" stroke-width="1"/><path d="M249.5 238.40H785.5" stroke="#c8c8c8" stroke-width="1"/><path d="M249.5 250.10H785.5" stroke="#c8c8c8" stroke-width="1"/><path d="M249.5 261.80H785.5" stroke="#6a6a6a" stroke-width="1"/><path d="M249.5 273.50H785.5" stroke="#c8c8c8" stroke-width="1"/><path d="M249.5 285.20H785.5" stroke="#c8c8c8" stroke-width="1"/><path d="M249.5 296.90H785.5" stroke="#c8c8c8" stroke-width="1"/><path d="M249.5 308.60H785.5" stroke="#6a6a6a" stroke-width="1"/><path d="M249.5 320.30H785.5" stroke="#c8c8c8" stroke-width="1"/><path d="M249.5 332.00H785.5" stroke="#c8c8c8" stroke-width="1"/><path d="M249.5 343.70H785.5" stroke="#c8c8c8" stroke-width="1"/><path d="M249.5 355.40H785.5" stroke="#6a6a6a" stroke-width="1"/><path d="M249.5 367.10H785.5" stroke="#c8c8c8" stroke-width="1"/><path d="M285.26 144.8V378.8" stroke="#bcbcbc" stroke-width="1"/><path d="M309.24 144.8V378.8" stroke="#bcbcbc" stroke-width="1"/><path d="M327.83 144.8V378.8" stroke="#bcbcbc" stroke-width="1"/><path d="M343.03 144.8V378.8" stroke="#bcbcbc" stroke-width="1"/><path d="M355.87 144.8V378.8" stroke="#bcbcbc" stroke-width="1"/><path d="M367.00 144.8V378.8" stroke="#bcbcbc" stroke-width="1"/><path d="M376.82 144.8V378.8" stroke="#bcbcbc" stroke-width="1"/><path d="M385.60 144.8V378.8" stroke="#6a6a6a" stroke-width="1"/><path d="M443.37 144.8V378.8" stroke="#bcbcbc" stroke-width="1"/><path d="M477.16 144.8V378.8" stroke="#bcbcbc" stroke-width="1"/><path d="M501.14 144.8V378.8" stroke="#bcbcbc" stroke-width="1"/><path d="M519.73 144.8V378.8" stroke="#bcbcbc" stroke-width="1"/><path d="M534.93 144.8V378.8" stroke="#bcbcbc" stroke-width="1"/><path d="M547.77 144.8V378.8" stroke="#bcbcbc" stroke-width="1"/><path d="M558.90 144.8V378.8" stroke="#bcbcbc" stroke-width="1"/><path d="M568.72 144.8V378.8" stroke="#bcbcbc" stroke-width="1"/><path d="M577.50 144.8V378.8" stroke="#6a6a6a" stroke-width="1"/><path d="M635.27 144.8V378.8" stroke="#bcbcbc" stroke-width="1"/><path d="M669.06 144.8V378.8" stroke="#bcbcbc" stroke-width="1"/><path d="M693.04 144.8V378.8" stroke="#bcbcbc" stroke-width="1"/><path d="M711.63 144.8V378.8" stroke="#bcbcbc" stroke-width="1"/><path d="M726.83 144.8V378.8" stroke="#bcbcbc" stroke-width="1"/><path d="M739.67 144.8V378.8" stroke="#bcbcbc" stroke-width="1"/><path d="M750.80 144.8V378.8" stroke="#bcbcbc" stroke-width="1"/><path d="M760.62 144.8V378.8" stroke="#bcbcbc" stroke-width="1"/><rect x="249.5" y="144.8" width="536.0" height="234.0" fill="none" stroke="#555" stroke-width="1.3"/><path d="M247.7 144.80H249.5" stroke="#444" stroke-width="1"/><path d="M247.7 156.50H249.5" stroke="#444" stroke-width="1"/><path d="M246.0 168.20H249.5" stroke="#444" stroke-width="1"/><path d="M247.7 179.90H249.5" stroke="#444" stroke-width="1"/><path d="M247.7 191.60H249.5" stroke="#444" stroke-width="1"/><path d="M247.7 203.30H249.5" stroke="#444" stroke-width="1"/><path d="M246.0 215.00H249.5" stroke="#444" stroke-width="1"/><path d="M247.7 226.70H249.5" stroke="#444" stroke-width="1"/><path d="M247.7 238.40H249.5" stroke="#444" stroke-width="1"/><path d="M247.7 250.10H249.5" stroke="#444" stroke-width="1"/><path d="M246.0 261.80H249.5" stroke="#444" stroke-width="1"/><path d="M247.7 273.50H249.5" stroke="#444" stroke-width="1"/><path d="M247.7 285.20H249.5" stroke="#444" stroke-width="1"/><path d="M247.7 296.90H249.5" stroke="#444" stroke-width="1"/><path d="M246.0 308.60H249.5" stroke="#444" stroke-width="1"/><path d="M247.7 320.30H249.5" stroke="#444" stroke-width="1"/><path d="M247.7 332.00H249.5" stroke="#444" stroke-width="1"/><path d="M247.7 343.70H249.5" stroke="#444" stroke-width="1"/><path d="M246.0 355.40H249.5" stroke="#444" stroke-width="1"/><path d="M247.7 367.10H249.5" stroke="#444" stroke-width="1"/><path d="M251.47 378.8v2.5" stroke="#444" stroke-width="1"/><path d="M285.26 378.8v2.5" stroke="#444" stroke-width="1"/><path d="M309.24 378.8v2.5" stroke="#444" stroke-width="1"/><path d="M327.83 378.8v2.5" stroke="#444" stroke-width="1"/><path d="M343.03 378.8v2.5" stroke="#444" stroke-width="1"/><path d="M355.87 378.8v2.5" stroke="#444" stroke-width="1"/><path d="M367.00 378.8v2.5" stroke="#444" stroke-width="1"/><path d="M376.82 378.8v2.5" stroke="#444" stroke-width="1"/><path d="M385.60 378.8v2.5" stroke="#444" stroke-width="1"/><path d="M443.37 378.8v2.5" stroke="#444" stroke-width="1"/><path d="M477.16 378.8v2.5" stroke="#444" stroke-width="1"/><path d="M501.14 378.8v2.5" stroke="#444" stroke-width="1"/><path d="M519.73 378.8v2.5" stroke="#444" stroke-width="1"/><path d="M534.93 378.8v2.5" stroke="#444" stroke-width="1"/><path d="M547.77 378.8v2.5" stroke="#444" stroke-width="1"/><path d="M558.90 378.8v2.5" stroke="#444" stroke-width="1"/><path d="M568.72 378.8v2.5" stroke="#444" stroke-width="1"/><path d="M577.50 378.8v2.5" stroke="#444" stroke-width="1"/><path d="M635.27 378.8v2.5" stroke="#444" stroke-width="1"/><path d="M669.06 378.8v2.5" stroke="#444" stroke-width="1"/><path d="M693.04 378.8v2.5" stroke="#444" stroke-width="1"/><path d="M711.63 378.8v2.5" stroke="#444" stroke-width="1"/><path d="M726.83 378.8v2.5" stroke="#444" stroke-width="1"/><path d="M739.67 378.8v2.5" stroke="#444" stroke-width="1"/><path d="M750.80 378.8v2.5" stroke="#444" stroke-width="1"/><path d="M760.62 378.8v2.5" stroke="#444" stroke-width="1"/><path d="M250.5 377.3H346.8" stroke="#94de98" stroke-width="2.2"/><path d="M385.6 261.80H784.5" stroke="#7cc8a8" stroke-width="2.2"/><path d="M346.6 378.5 L347.8 362 L349.5 350 C351 336 352.5 322 355.4 308.3 C358 296 362 284 366.8 277 C370 272 374 266.5 378 264.3 L385.6 261.7" stroke="#a8eee4" stroke-width="3.8" fill="none" opacity="0.8"/><path d="M346.6 378.5 L347.8 362 L349.5 350 C351 336 352.5 322 355.4 308.3 C358 296 362 284 366.8 277 C370 272 374 266.5 378 264.3 L385.6 261.7" stroke="#4a767c" stroke-width="1.8" fill="none"/></svg>
<div class="t" style="left:200.5px;top:146.60px;width:41px;text-align:right;font-size:8px;color:#444">30dB</div>
<div class="t" style="left:200.5px;top:164.60px;width:41px;text-align:right;font-size:8px;color:#2a2a2a"><b>24</b>dB</div>
<div class="t" style="left:200.5px;top:176.30px;width:41px;text-align:right;font-size:8px;color:#444">21dB</div>
<div class="t" style="left:200.5px;top:188.00px;width:41px;text-align:right;font-size:8px;color:#444">18dB</div>
<div class="t" style="left:200.5px;top:199.70px;width:41px;text-align:right;font-size:8px;color:#444">15dB</div>
<div class="t" style="left:200.5px;top:211.40px;width:41px;text-align:right;font-size:8px;color:#2a2a2a"><b>12</b>dB</div>
<div class="t" style="left:200.5px;top:223.10px;width:41px;text-align:right;font-size:8px;color:#444">9dB</div>
<div class="t" style="left:200.5px;top:234.80px;width:41px;text-align:right;font-size:8px;color:#444">6dB</div>
<div class="t" style="left:200.5px;top:246.50px;width:41px;text-align:right;font-size:8px;color:#444">3dB</div>
<div class="t" style="left:200.5px;top:258.20px;width:41px;text-align:right;font-size:8px;color:#2a2a2a"><b>0</b>dB</div>
<div class="t" style="left:200.5px;top:269.90px;width:41px;text-align:right;font-size:8px;color:#444">-3dB</div>
<div class="t" style="left:200.5px;top:281.60px;width:41px;text-align:right;font-size:8px;color:#444">-6dB</div>
<div class="t" style="left:200.5px;top:293.30px;width:41px;text-align:right;font-size:8px;color:#444">-9dB</div>
<div class="t" style="left:200.5px;top:305.00px;width:41px;text-align:right;font-size:8px;color:#2a2a2a"><b>-12</b>dB</div>
<div class="t" style="left:200.5px;top:316.70px;width:41px;text-align:right;font-size:8px;color:#444">-15dB</div>
<div class="t" style="left:200.5px;top:328.40px;width:41px;text-align:right;font-size:8px;color:#444">-18dB</div>
<div class="t" style="left:200.5px;top:340.10px;width:41px;text-align:right;font-size:8px;color:#444">-21dB</div>
<div class="t" style="left:200.5px;top:351.80px;width:41px;text-align:right;font-size:8px;color:#2a2a2a"><b>-24</b>dB</div>
<div class="t" style="left:200.5px;top:363.50px;width:41px;text-align:right;font-size:8px;color:#444">-27dB</div>
<div class="t" style="left:234.00px;top:383px;width:50px;text-align:center;font-size:8px;color:#444">20Hz</div>
<div class="t" style="left:260.26px;top:383px;width:50px;text-align:center;font-size:8px;color:#444">30Hz</div>
<div class="t" style="left:284.24px;top:383px;width:50px;text-align:center;font-size:8px;color:#444">40Hz</div>
<div class="t" style="left:318.03px;top:383px;width:50px;text-align:center;font-size:8px;color:#444">60Hz</div>
<div class="t" style="left:360.60px;top:383px;width:50px;text-align:center;font-size:8px;color:#444"><b>100</b>Hz</div>
<div class="t" style="left:388.64px;top:383px;width:50px;text-align:center;font-size:8px;color:#444">140Hz</div>
<div class="t" style="left:418.37px;top:383px;width:50px;text-align:center;font-size:8px;color:#444">200Hz</div>
<div class="t" style="left:452.16px;top:383px;width:50px;text-align:center;font-size:8px;color:#444">300Hz</div>
<div class="t" style="left:494.73px;top:383px;width:50px;text-align:center;font-size:8px;color:#444">500Hz</div>
<div class="t" style="left:522.77px;top:383px;width:50px;text-align:center;font-size:8px;color:#444">700Hz</div>
<div class="t" style="left:552.50px;top:383px;width:50px;text-align:center;font-size:8px;color:#444"><b>1000</b>Hz</div>
<div class="t" style="left:610.27px;top:383px;width:50px;text-align:center;font-size:8px;color:#444">2000Hz</div>
<div class="t" style="left:644.06px;top:383px;width:50px;text-align:center;font-size:8px;color:#444">3000Hz</div>
<div class="t" style="left:686.63px;top:383px;width:50px;text-align:center;font-size:8px;color:#444">5000Hz</div>
<div class="t" style="left:725.80px;top:383px;width:50px;text-align:center;font-size:8px;color:#444">8000Hz</div>
<div class="t" style="left:789.5px;top:145.5px;font-size:7.5px;color:#3a3a3a;font-weight:normal;">+ dB</div>
<div class="t" style="left:789.5px;top:369px;font-size:7.5px;color:#3a3a3a;font-weight:normal;">- dB</div>
<div class="a" style="left:795px;top:161px;width:2.5px;height:200px;background:#e2e2e4;border-radius:1px"></div>
<svg style="left:790px;top:204.4px" width="15" height="9"><path d="M1 1.2H10.5L13.8 4.2L10.5 7.5H1Z" fill="#1a6fc8" stroke="#1a6fc8" stroke-width="0.8" stroke-linejoin="round"/></svg>
<svg style="left:790px;top:284.4px" width="15" height="9"><path d="M1 1.2H10.5L13.8 4.2L10.5 7.5H1Z" fill="#1a6fc8" stroke="#1a6fc8" stroke-width="0.8" stroke-linejoin="round"/></svg>
<div class="a" style="left:369px;top:402.5px;width:8.8px;height:8.8px;border:1px solid #666;background:#fff;border-radius:1.5px"></div>
<div class="t" style="left:380px;top:403px;font-size:7.6px;color:#444;font-weight:normal;">Linear Frequency Scale</div>
<div class="a" style="left:474px;top:400px;width:48px;height:13px;background:#fdfdfd;border:1px solid #e2e2e4;border-radius:2px"></div>
<div class="t" style="left:486px;top:403px;font-size:8px;color:#444;font-weight:normal;">Flatten</div>
<div class="a" style="left:531px;top:400px;width:47.5px;height:13px;background:#fdfdfd;border:1px solid #e2e2e4;border-radius:2px"></div>
<div class="t" style="left:544px;top:403px;font-size:8px;color:#444;font-weight:normal;">Invert</div>
<svg style="left:586.5px;top:401.8px" width="10" height="10"><rect x="0.5" y="0.5" width="9" height="9" rx="1.2" fill="#1f6dc0"/><path d="M2.3 5.2L4.2 7L7.8 3" stroke="#fff" stroke-width="1.1" fill="none"/></svg>
<div class="t" style="left:598px;top:403px;font-size:7.7px;color:#444;font-weight:normal;">Show grid lines</div>
<svg style="left:725px;top:401px" width="10" height="12"><path d="M1.5 1L8.5 7.5H4.8L3 11Z" fill="#b04a5a"/></svg>
<div class="a" style="left:221px;top:422.7px;width:47px;height:12px;background:#fdfdfd;border:1px solid #e6e6e8;border-radius:2px"></div>
<div class="t" style="left:231px;top:425px;font-size:8px;color:#444;font-weight:normal;">Preview</div>
<div class="a" style="left:702px;top:422.7px;width:46px;height:12px;background:#fdfdfd;border:1px solid #e6e6e8;border-radius:2px"></div>
<div class="t" style="left:713px;top:425px;font-size:8px;color:#444;font-weight:normal;">Cancel</div>
<div class="a" style="left:755.5px;top:422.7px;width:47px;height:12px;background:#fdfdfd;border:1px solid #e6e6e8;border-radius:2px"></div>
<div class="t" style="left:768px;top:425px;font-size:8px;color:#444;font-weight:normal;">Apply</div>
</body></html>
